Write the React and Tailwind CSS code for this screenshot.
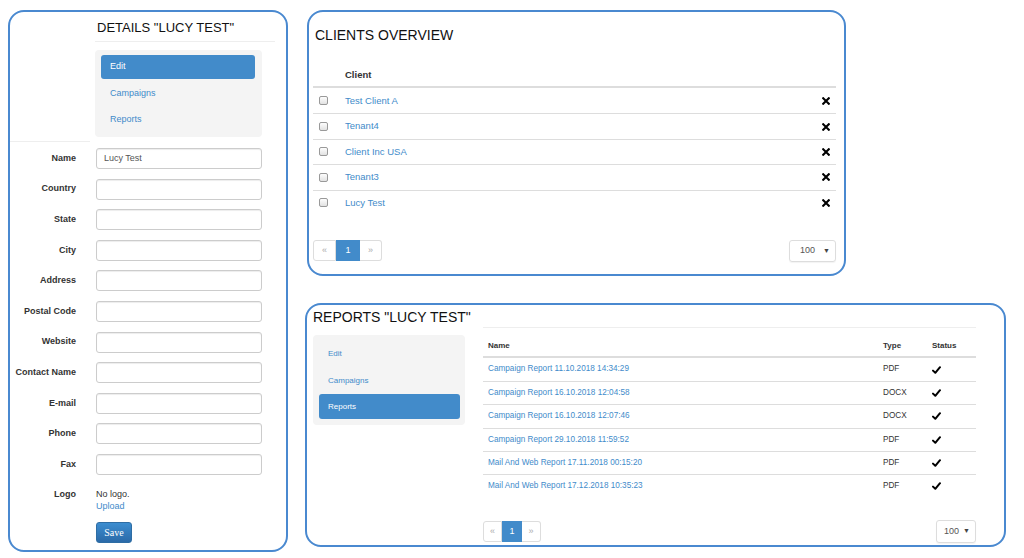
const font = { fontFamily: '"Liberation Sans", Arial, sans-serif' };

const fields = [
  "Name",
  "Country",
  "State",
  "City",
  "Address",
  "Postal Code",
  "Website",
  "Contact Name",
  "E-mail",
  "Phone",
  "Fax",
];

const clients = ["Test Client A", "Tenant4", "Client Inc USA", "Tenant3", "Lucy Test"];

const reports = [
  { name: "Campaign Report 11.10.2018 14:34:29", type: "PDF" },
  { name: "Campaign Report 16.10.2018 12:04:58", type: "DOCX" },
  { name: "Campaign Report 16.10.2018 12:07:46", type: "DOCX" },
  { name: "Campaign Report 29.10.2018 11:59:52", type: "PDF" },
  { name: "Mail And Web Report 17.11.2018 00:15:20", type: "PDF" },
  { name: "Mail And Web Report 17.12.2018 10:35:23", type: "PDF" },
];

function Cross() {
  return (
    <svg width="8" height="8" viewBox="0 0 8 8">
      <path d="M1.2 1.2 L6.8 6.8 M6.8 1.2 L1.2 6.8" stroke="#000" strokeWidth="2.1" strokeLinecap="square" />
    </svg>
  );
}

function Check() {
  return (
    <svg width="9" height="8" viewBox="0 0 9 8">
      <path d="M1 4.6 L3.3 6.8 L8 1.2" stroke="#000" strokeWidth="2" fill="none" strokeLinecap="round" strokeLinejoin="round" />
    </svg>
  );
}

function Pager({ w, h }) {
  return (
    <div className={`flex ${h} text-[9px]`}>
      <div className={`${w[0]} flex items-center justify-center border border-[#ddd] rounded-l-[3px] text-[#aaa]`}>«</div>
      <div className={`${w[1]} flex items-center justify-center bg-[#428bca] border border-[#428bca] text-white`}>1</div>
      <div className={`${w[2]} flex items-center justify-center border border-[#ddd] border-l-0 rounded-r-[3px] text-[#aaa]`}>»</div>
    </div>
  );
}

function PageSize({ cls }) {
  return (
    <div className={`${cls} flex items-center justify-between border border-[#ddd] rounded-[3px] pr-[5px] text-[9px] text-[#555] shadow-[0_1px_1px_rgba(0,0,0,0.05)]`}>
      <span>100</span>
      <span className="text-[7px] text-[#444]">▼</span>
    </div>
  );
}

function DetailsPanel() {
  return (
    <div className="mt-[10px] ml-[8px] w-[280px] h-[542px] border-2 border-[#4a89d0] rounded-[16px] flex flex-col shrink-0">
      <div className="ml-[85px] w-[180px] h-[30px] pt-[8px] pl-[2px] border-b border-[#eee] text-[13px] leading-[16px] text-[#111]">
        DETAILS "LUCY TEST"
      </div>
      <div className="flex">
        <div className="w-[80px] border-b border-[#eee]" />
        <div className="ml-[5px] mt-[8px] mb-[5px] w-[167px] bg-[#f4f4f4] rounded-[4px] pt-[5px] pl-[6px] pr-[7px] pb-[5px] text-[9px]">
          <div className="h-[24px] bg-[#428bca] rounded-[3px] text-white flex items-center pl-[9px]">Edit</div>
          <div className="h-[27px] pt-[2px] text-[#428bca] flex items-center pl-[9px]">Campaigns</div>
          <div className="h-[26px] pt-[2px] text-[#428bca] flex items-center pl-[9px]">Reports</div>
        </div>
      </div>
      <div className="mt-[6px] flex flex-col gap-[9.6px]">
        {fields.map((f) => (
          <div key={f} className="flex items-center h-[21px]">
            <div className="w-[85px] pr-[19px] text-right text-[9px] font-bold text-[#333]">{f}</div>
            <div className="ml-[1px] w-[166px] h-[21px] border border-[#ccc] rounded-[3px] shadow-[inset_0_1px_1px_rgba(0,0,0,0.075)] flex items-center pl-[7px] text-[9px] text-[#555]">
              {f === "Name" ? "Lucy Test" : ""}
            </div>
          </div>
        ))}
      </div>
      <div className="mt-[13px] flex text-[9px] leading-[12px]">
        <div className="w-[85px] pr-[19px] text-right font-bold text-[#333]">Logo</div>
        <div className="ml-[1px]">
          <div className="text-[#333]">No logo.</div>
          <div className="text-[#428bca]">Upload</div>
        </div>
      </div>
      <div className="mt-[10px] ml-[86px]">
        <div
          className="w-[36px] h-[21px] rounded-[3px] border border-[#2e6da4] bg-gradient-to-b from-[#3c8dd0] to-[#2b6aa8] text-white text-[10px] flex items-center justify-center"
          style={{ fontFamily: '"Liberation Serif", serif' }}
        >
          Save
        </div>
      </div>
    </div>
  );
}

function ClientsPanel() {
  return (
    <div className="ml-[2px] w-[539px] h-[266px] border-2 border-[#4a89d0] rounded-[16px] flex flex-col">
      <div className="h-[49px] pt-[15px] pl-[6px] text-[14px] leading-[16px] text-[#111]">CLIENTS OVERVIEW</div>
      <div className="ml-[4px] w-[523px]">
        <div className="h-[27px] pt-[3px] flex items-center border-b-2 border-[#ddd] text-[9.5px] font-bold text-[#333]">
          <div className="w-[32px]" />
          <div>Client</div>
        </div>
        {clients.map((c, i) => (
          <div key={c} className={`h-[25.4px] flex items-center text-[9.5px] ${i > 0 ? "border-t border-[#ddd]" : ""}`}>
            <div className="w-[32px] pl-[6px] flex items-center">
              <div className="w-[9px] h-[9px] rounded-[2px] border border-[#999] bg-gradient-to-b from-[#fdfdfd] to-[#e2e2e2]" />
            </div>
            <div className="flex-1 text-[#428bca]">{c}</div>
            <div className="pr-[6px] flex items-center">
              <Cross />
            </div>
          </div>
        ))}
        <div className="mt-[25px] flex justify-between items-start">
          <Pager w={["w-[23px]", "w-[24px]", "w-[22px]"]} h="h-[21px]" />
          <PageSize cls="w-[47px] h-[22px] pl-[10px]" />
        </div>
      </div>
    </div>
  );
}

function ReportsPanel() {
  return (
    <div className="mt-[27px] w-[701px] h-[244px] border-2 border-[#4a89d0] rounded-[16px] flex flex-col">
      <div className="h-[22px] pt-[4px] pl-[6px] text-[14px] leading-[16px] text-[#111]">REPORTS "LUCY TEST"</div>
      <div className="flex">
        <div className="ml-[6px] mt-[8px] w-[152px] h-[90px] bg-[#f4f4f4] rounded-[4px] pt-[5px] pl-[6px] pr-[5px] text-[8px]">
          <div className="h-[27px] text-[#428bca] flex items-center pl-[9px]">Edit</div>
          <div className="h-[27px] text-[#428bca] flex items-center pl-[9px]">Campaigns</div>
          <div className="h-[25px] bg-[#428bca] rounded-[3px] text-white flex items-center pl-[9px]">Reports</div>
        </div>
        <div className="ml-[18px] w-[493px]">
          <div className="h-[31px] pt-[7px] flex items-center border-t border-[#eee] border-b-2 border-b-[#ddd] text-[8px] font-bold text-[#333]">
            <div className="w-[395px] pl-[5px]">Name</div>
            <div className="w-[49px] pl-[5px]">Type</div>
            <div className="pl-[5px]">Status</div>
          </div>
          {reports.map((r, i) => (
            <div key={r.name} className={`h-[23.2px] flex items-center text-[8.2px] ${i > 0 ? "border-t border-[#ddd]" : ""}`}>
              <div className="w-[395px] pl-[5px] text-[#428bca]">{r.name}</div>
              <div className="w-[49px] pl-[5px] text-[#333]">{r.type}</div>
              <div className="pl-[5px] flex items-center">
                <Check />
              </div>
            </div>
          ))}
          <div className="mt-[24px] flex justify-between items-start">
            <Pager w={["w-[19px]", "w-[20px]", "w-[19px]"]} h="h-[21px]" />
            <PageSize cls="w-[40px] h-[23px] -mt-[1px] pl-[7px]" />
          </div>
        </div>
      </div>
    </div>
  );
}

export default function App() {
  return (
    <div className="w-[1024px] h-[558px] bg-white flex overflow-hidden" style={font}>
      <DetailsPanel />
      <div className="ml-[17px] mt-[10px] flex flex-col items-start">
        <ClientsPanel />
        <ReportsPanel />
      </div>
    </div>
  );
}
